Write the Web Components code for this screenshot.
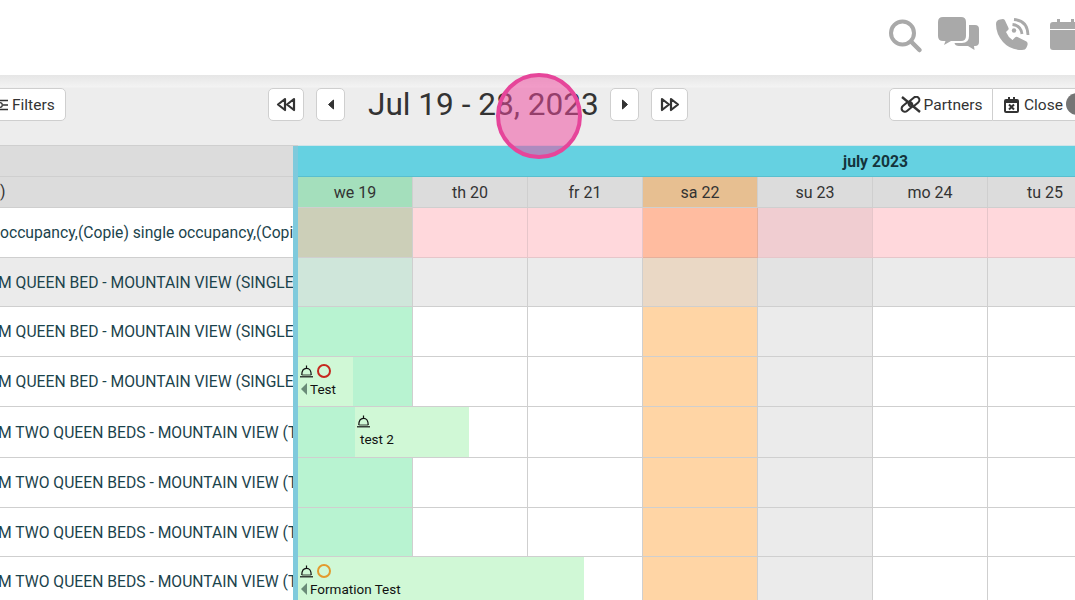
<!DOCTYPE html>
<html>
<head>
<meta charset="utf-8">
<style>
  html, body { margin: 0; height: 600px; overflow: hidden; background: #fff; }
  body { font-family: Roboto, "Liberation Sans", sans-serif; position: relative; }
</style>
</head>
<body>
<top-bar></top-bar>
<tool-bar></tool-bar>
<cal-grid></cal-grid>
<click-halo></click-halo>

<script>
class TopBar extends HTMLElement {
  constructor() {
    super();
    this.attachShadow({ mode: 'open' });
    this.shadowRoot.innerHTML = `
      <style>
        :host {
          display: flex;
          justify-content: flex-end;
          height: 75px;
          background: #fff;
          overflow: hidden;
        }
        svg { display: block; fill: #a9a9a9; flex: none; }
      </style>
      <svg width="186" height="75" viewBox="889 0 186 75">
        <circle cx="902.5" cy="33" r="11.5" fill="none" stroke="#a9a9a9" stroke-width="4"/>
        <path d="M911 41.5 L919.5 50" fill="none" stroke="#a9a9a9" stroke-width="4.5" stroke-linecap="round"/>
        <path d="M943 17 H961 Q966 17 966 22 V36 Q966 41 961 41 H951 L944 45 L945.5 41 H943 Q938 41 938 36 V22 Q938 17 943 17Z"/>
        <path d="M969 25 H975 Q979 25 979 29 V42 Q979 46 975 46 H974 L974.5 50 L968 46 H959 Q955 46 954.5 43 H962 Q969 43 969 36Z"/>
        <path d="M996 24 Q996 20 1000 19.5 L1003 19 Q1004.5 19 1005 20.5 L1008.500 28 Q1009 29.500 1007.500 30.500 L1006 32 Q1008 37 1012.500 40 L1015 37.500 Q1016 36.500 1017.500 37 L1026.500 41.500 Q1028 42.500 1027.500 45 L1026.500 47.500 Q1025.500 50 1022 50 Q1010 50 1003 42 Q996 34 996 24Z"/>
        <circle cx="1014" cy="30.500" r="2.200"/>
        <path d="M1012.500 24.500 Q1021 25.500 1022 34" fill="none" stroke="#a9a9a9" stroke-width="2.800"/>
        <path d="M1014 19.500 Q1027.500 20.500 1028 35" fill="none" stroke="#a9a9a9" stroke-width="2.800"/>
        <path d="M1053 22 H1057 V19 H1060 V22 H1071 V19 H1074 V22 H1078 V29 H1050 V25 Q1050 22 1053 22Z"/>
        <path d="M1050 30 H1078 V50 H1053 Q1050 50 1050 47Z"/>
      </svg>`;
  }
}

class ToolButton extends HTMLElement {
  constructor() {
    super();
    this.attachShadow({ mode: 'open' });
    this.shadowRoot.innerHTML = `
      <style>
        :host {
          display: inline-flex;
          align-items: center;
          justify-content: center;
          box-sizing: border-box;
          height: 33px;
          background: #fff;
          border: 1px solid #cfcfcf;
          border-radius: 5px;
          color: #333;
          font-size: 15.5px;
          flex: none;
        }
      </style>
      <slot></slot>`;
  }
}

class ToolBar extends HTMLElement {
  constructor() {
    super();
    this.attachShadow({ mode: 'open' });
    const dark = '#333';
    this.shadowRoot.innerHTML = `
      <style>
        :host {
          display: flex;
          align-items: flex-start;
          height: 70px;
          box-sizing: border-box;
          padding-top: 13px;
          background: linear-gradient(#e6e6e6 0, #f3f3f3 12px, #ededed 13px);
          overflow: hidden;
          color: #333;
        }
        svg { display: block; flex: none; }
        .filters {
          width: 77px; margin-left: -11px; margin-right: 202px;
          justify-content: flex-start; padding-left: 2px; gap: 4px;
        }
        .nav { display: flex; align-items: flex-start; flex: none; }
        .title {
          width: 230px; margin: 0 12px 0 23px; flex: none;
          font-size: 31.6px; line-height: 33px; white-space: nowrap;
          color: #333;
        }
        .group { display: flex; margin-left: 201px; flex: none; }
        .partners { width: 104px; border-radius: 5px 0 0 5px; gap: 3px; }
        .close { width: 120px; border-left: 0; border-radius: 0 5px 5px 0; justify-content: flex-start; padding-left: 11px; gap: 5px; position: relative; }
        .knob {
          position: absolute; left: 73px; top: 4px;
          width: 22px; height: 22px; border-radius: 50%; background: #757575;
        }
      </style>
      <tool-button class="filters">
        <svg width="16" height="14" viewBox="0 0 16 14" fill="none" stroke="${dark}" stroke-width="1.3">
          <path d="M0 2.500 H16 M0 7 H5 M11 7 H16 M0 11.500 H16"/><circle cx="8" cy="7" r="2.300"/>
        </svg><span>Filters</span>
      </tool-button>
      <div class="nav">
        <tool-button style="width:36px;margin-right:12px">
          <svg width="20" height="15" viewBox="0 0 20 15" fill="none" stroke="${dark}" stroke-width="2.200" stroke-linejoin="round">
            <path d="M9 2 L2 7.500 L9 13Z M18 2 L11 7.500 L18 13Z"/>
          </svg>
        </tool-button>
        <tool-button style="width:29px">
          <svg width="8" height="11" viewBox="0 0 8 11" fill="${dark}" stroke="${dark}" stroke-linejoin="round"><path d="M6.500 1 V10 L1.500 5.500Z"/></svg>
        </tool-button>
      </div>
      <div class="title">Jul 19 - 28, 2023</div>
      <div class="nav">
        <tool-button style="width:29px;margin-right:12px">
          <svg width="8" height="11" viewBox="0 0 8 11" fill="${dark}" stroke="${dark}" stroke-linejoin="round"><path d="M1.500 1 V10 L6.500 5.500Z"/></svg>
        </tool-button>
        <tool-button style="width:37px">
          <svg width="20" height="15" viewBox="0 0 20 15" fill="none" stroke="${dark}" stroke-width="2.200" stroke-linejoin="round">
            <path d="M2 2 L9 7.500 L2 13Z M11 2 L18 7.500 L11 13Z"/>
          </svg>
        </tool-button>
      </div>
      <div class="group">
        <tool-button class="partners">
          <svg width="21" height="17" viewBox="0 0 21 17" fill="none" stroke="${dark}" stroke-width="2.100">
            <rect x="1" y="7.500" width="12" height="6.500" rx="3.250" transform="rotate(-40 7 10.750)"/>
            <rect x="8" y="2.500" width="12" height="6.500" rx="3.250" transform="rotate(-40 14 5.750)"/>
            <path d="M2 1 L20 16" stroke-width="2.300"/>
          </svg><span>Partners</span>
        </tool-button>
        <tool-button class="close">
          <svg width="15" height="16" viewBox="0 0 15 16">
            <path fill="${dark}" d="M2 2 H4 V0 H6 V2 H9 V0 H11 V2 H13 Q15 2 15 4 V14 Q15 16 13 16 H2 Q0 16 0 14 V4 Q0 2 2 2Z"/>
            <path fill="#fff" d="M2 6 H13 V14 H2Z"/>
            <path stroke="${dark}" stroke-width="2" d="M5 7.500 L10 12.500 M10 7.500 L5 12.500"/>
          </svg><span>Close</span>
          <span class="knob"></span>
        </tool-button>
      </div>`;
  }
}

class BookingBar extends HTMLElement {
  static get observedAttributes() { return ['label', 'ring', 'cut']; }
  constructor() {
    super();
    this.attachShadow({ mode: 'open' });
  }
  connectedCallback() { this.render(); }
  attributeChangedCallback() { this.render(); }
  render() {
    const ring = this.getAttribute('ring');
    const cut = this.hasAttribute('cut');
    this.shadowRoot.innerHTML = `
      <style>
        :host {
          display: block;
          background: #d0f8d6;
          color: #111;
          font-size: 13.5px;
          overflow: hidden;
          box-sizing: border-box;
          padding: 7px 0 0 2px;
          min-width: 0;
        }
        .top { display: flex; align-items: center; gap: 3px; height: 14px; }
        .ring { width: 10px; height: 10px; border-radius: 50%; border: 2px solid ${ring || 'transparent'}; margin-left: 1px; }
        .bottom { display: flex; align-items: center; gap: 3px; height: 16px; margin-top: 3px; padding-left: ${cut ? 1 : 3}px; white-space: nowrap; }
        .cut { width: 0; height: 0; border-style: solid; border-width: 6px 6px 6px 0; border-color: transparent #6a8b78 transparent transparent; }
        svg { display: block; flex: none; }
      </style>
      <div class="top">
        <svg width="13" height="13" viewBox="0 0 13 13" fill="none" stroke="#111" stroke-width="1.200">
          <path d="M0 11.800 H13"/><path d="M1.800 10 Q1.800 3.300 6.500 3.300 Q11.200 3.300 11.200 10"/><path d="M1.800 10 H11.200" stroke-width="0.800"/><path d="M6.500 0.500 V3.300"/>
        </svg>
        ${ring ? '<span class="ring"></span>' : ''}
      </div>
      <div class="bottom">${cut ? '<span class="cut"></span>' : ''}<span>${this.getAttribute('label') || ''}</span></div>`;
  }
}

class CalGrid extends HTMLElement {
  constructor() {
    super();
    this.attachShadow({ mode: 'open' });
    this.days = [
      { name: 'we 19', kind: 'today' },
      { name: 'th 20', kind: '' },
      { name: 'fr 21', kind: '' },
      { name: 'sa 22', kind: 'sat' },
      { name: 'su 23', kind: 'sun' },
      { name: 'mo 24', kind: '' },
      { name: 'tu 25', kind: '' }
    ];
    const queen = 'M QUEEN BED - MOUNTAIN VIEW (SINGLE';
    const two = 'M TWO QUEEN BEDS - MOUNTAIN VIEW (T';
    this.rows = [
      { label: 'occupancy,(Copie) single occupancy,(Copi', type: 'rate', off: 0 },
      { label: queen, type: 'group', off: -2 },
      { label: queen, type: 'room', off: -2 },
      { label: queen, type: 'room', off: -2 },
      { label: two, type: 'room', off: -2 },
      { label: two, type: 'room', off: -2 },
      { label: two, type: 'room', off: -2 },
      { label: two, type: 'room', off: -2 }
    ];
  }

  connectedCallback() {
    const dayCells = this.days.map((d, j) => `<div class="day ${d.kind}" style="grid-row:3;grid-column:${j + 3}">${d.name}</div>`).join('');
    const rowCells = this.rows.map((r, i) => `
      <div class="label ${r.type}" style="grid-row:${i + 4}"><span style="margin-left:${r.off}px">${r.label}</span></div>
      ${this.days.map((d, j) => `<div class="cell ${r.type} ${d.kind}" style="grid-row:${i + 4};grid-column:${j + 3}"></div>`).join('')}
    `).join('');

    this.shadowRoot.innerHTML = `
      <style>
        :host {
          display: block;
          height: 455px;
          overflow: hidden;
          color: #333;
          font-size: 15.7px;
        }
        .grid {
          display: grid;
          grid-template-columns: 293px 5px repeat(10, 115px);
          grid-template-rows: 1px 31px 31px 50px 49px 50px 50px 51px 50px 49px 50px;
          width: 1448px;
        }
        .line { grid-column: 1 / 3; grid-row: 1; background: #cfcfcf; }
        .line.right { grid-column: 3 / -1; background: #cfe4e8; }
        .strip { grid-column: 2; grid-row: 2 / -1; background: #7fcadc; z-index: 2; }
        .head {
          grid-column: 1; background: #dcdcdc; border-bottom: 1px solid #cfcfcf;
          white-space: nowrap; overflow: hidden; line-height: 30px;
        }
        .month {
          grid-column: 3 / -1; background: #65d1e1; border-bottom: 1px solid #58bfcf;
          text-align: center; font-weight: 700; line-height: 31px; color: #14343c; padding-left: 5px;
        }
        .day {
          background: #dcdcdc; border-right: 1px solid #cfcfcf; border-bottom: 1px solid #cfcfcf;
          text-align: center; line-height: 31px; font-size: 16px;
        }
        .day.today { background: #a4dfbc; }
        .day.sat { background: #e7bf91; }
        .label {
          grid-column: 1; display: flex; align-items: center; white-space: nowrap; overflow: hidden;
          border-bottom: 1px solid #cfcfcf; color: #1b434c; background: #fff;
        }
        .label.group { background: #ebebeb; }
        .cell { border-right: 1px solid #cfcfcf; border-bottom: 1px solid #cfcfcf; background: #fff; }
        .cell.sat { background: #ffd5a5; }
        .cell.sun { background: #ebebeb; }
        .cell.today { background: #b8f3d1; }
        .cell.rate { background: #ffd8dc; border-color: #e6c6ca; }
        .cell.rate.today { background: #cccfb8; border-color: #cfcfcf; }
        .cell.rate.sat { background: #ffbca0; border-color: #e6b09c; }
        .cell.rate.sun { background: #f0cdd1; }
        .cell.group { background: #ebebeb; }
        .cell.group.today { background: #cfe6da; }
        .cell.group.sat { background: #ead8c5; }
        .cell.group.sun { background: #e3e3e3; }
        booking-bar { margin-bottom: 1px; z-index: 1; }
      </style>
      <div class="grid">
        <div class="line"></div><div class="line right"></div>
        <div class="strip"></div>
        <div class="head" style="grid-row:2"></div>
        <div class="month" style="grid-row:2">july 2023</div>
        <div class="head" style="grid-row:3">)</div>
        ${dayCells}
        ${rowCells}
        <booking-bar label="Test" ring="#c6281e" cut style="grid-row:7;grid-column:3;width:55px"></booking-bar>
        <booking-bar label="test 2" style="grid-row:8;grid-column:3 / span 2;margin-left:57px;width:114px"></booking-bar>
        <booking-bar label="Formation Test" ring="#e39a2d" cut style="grid-row:11;grid-column:3 / span 3;width:286px"></booking-bar>
      </div>`;
  }
}

class ClickHalo extends HTMLElement {
  constructor() {
    super();
    this.attachShadow({ mode: 'open' });
    this.shadowRoot.innerHTML = `
      <style>
        :host {
          position: absolute;
          left: 496px;
          top: 73px;
          width: 86px;
          height: 86px;
          box-sizing: border-box;
          border-radius: 50%;
          border: 4px solid #e6459a;
          background: rgba(240, 75, 160, 0.52);
          z-index: 5;
        }
      </style>`;
  }
}

customElements.define('top-bar', TopBar);
customElements.define('tool-button', ToolButton);
customElements.define('tool-bar', ToolBar);
customElements.define('booking-bar', BookingBar);
customElements.define('cal-grid', CalGrid);
customElements.define('click-halo', ClickHalo);
</script>
</body>
</html>
